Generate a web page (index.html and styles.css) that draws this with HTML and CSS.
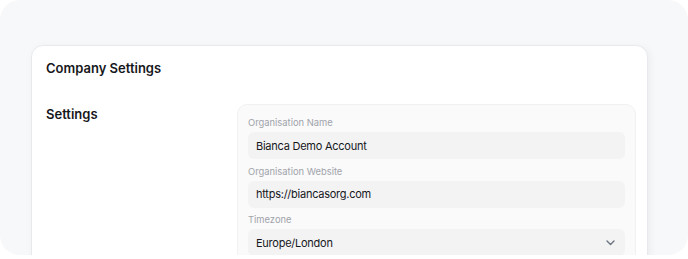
FILE: index.html
```html
<!DOCTYPE html>
<html lang="en">
<head>
  <meta charset="UTF-8" />
  <title>Company Settings</title>
  <link rel="stylesheet" href="styles.css">
</head>
<body>
  <div class="frame">
    <div class="card">
      <h1 class="card-title">Company Settings</h1>

      <div class="settings-row">
        <h2 class="section-title">Settings</h2>

        <div class="panel">
          <div class="field">
            <label>Organisation Name</label>
            <div class="input">Bianca Demo Account</div>
          </div>
          <div class="field">
            <label>Organisation Website</label>
            <div class="input">https://biancasorg.com</div>
          </div>
          <div class="field">
            <label>Timezone</label>
            <div class="input select">
              <span>Europe/London</span>
              <svg width="9" height="6" viewBox="0 0 9 6" fill="none">
                <path d="M1 1l3.5 3.5L8 1" stroke="#6b7280" stroke-width="1.4" stroke-linecap="round" stroke-linejoin="round"/>
              </svg>
            </div>
          </div>
        </div>
      </div>
    </div>
  </div>
</body>
</html>
```

FILE: styles.css
```css
* {
  box-sizing: border-box;
  font-family: Inter, 'Noto Sans', sans-serif;
}

body {
  margin: 0;
  background: #fff;
  overflow: hidden;
}

.frame {
  width: 688px;
  height: 255px;
  background: #f7f8fa;
  border-radius: 20px;
  overflow: hidden;
  padding: 45px 40px 0 31px;
}

.card {
  background: #fff;
  border: 1px solid #e7e9ed;
  border-radius: 12px;
  box-shadow: 2px 2px 8px rgba(0, 0, 0, 0.05);
  padding: 12px 11px 20px 14px;
  height: 320px;
}

.card-title {
  margin: 0;
  font-size: 13px;
  line-height: 20px;
  font-weight: 600;
  color: #16171b;
}

.settings-row {
  display: flex;
  margin-top: 26px;
}

.section-title {
  margin: 0;
  width: 191px;
  flex-shrink: 0;
  font-size: 13px;
  line-height: 20px;
  font-weight: 600;
  color: #16171b;
}

.panel {
  flex: 1;
  background: #fafafa;
  border: 1px solid #f1f1f2;
  border-radius: 10px;
  padding: 12px 10px 12px 10px;
  display: flex;
  flex-direction: column;
  gap: 6.5px;
}

.field label {
  display: block;
  font-size: 9.4px;
  line-height: 12px;
  color: #a0a3ab;
  margin-bottom: 3px;
}

.input {
  height: 27px;
  background: #f3f3f4;
  border-radius: 6px;
  padding: 0 8px;
  display: flex;
  align-items: center;
  font-size: 11px;
  letter-spacing: -0.25px;
  color: #16171b;
}

.select {
  justify-content: space-between;
  padding-right: 10px;
}
```
